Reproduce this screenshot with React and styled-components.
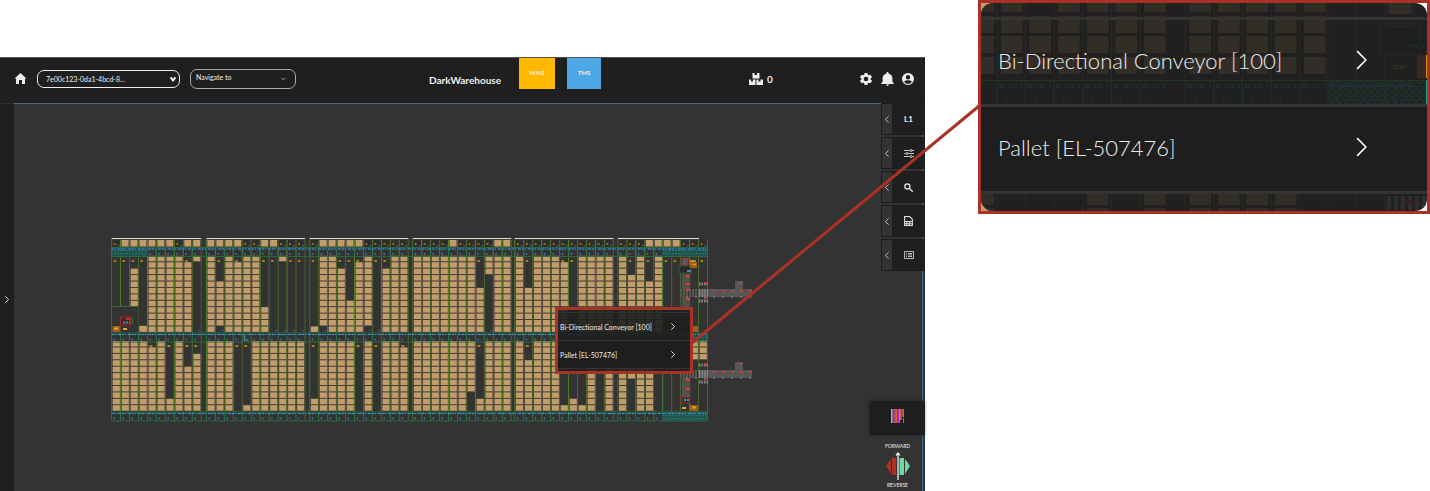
import React from "react";
import styled, { createGlobalStyle } from "styled-components";

const GlobalStyle = createGlobalStyle`
  * { box-sizing: border-box; }
  body { margin: 0; background: #fff; }
  button, select { font: inherit; color: inherit; }
  svg { display: block; }
`;

const Page = styled.div`
  position: relative;
  display: grid;
  grid-template-columns: minmax(0, 1fr) 452px;
  column-gap: 53px;
  align-items: start;
  min-height: 100vh;
  font-family: Lato, "Liberation Sans", sans-serif;
  color: #eee;
`;

const Frame = styled.main`
  margin-top: 57px;
  min-height: calc(100vh - 57px);
  display: flex;
  flex-direction: column;
  background: #333;
`;

const Header = styled.header`
  display: grid;
  grid-template-columns: minmax(0, 429fr) minmax(0, 320fr) minmax(0, 176fr);
  height: 46px;
  background: #1f1f1f;
  border-top: 1px solid #555;
`;

const HeaderLeft = styled.div`
  display: flex;
  align-items: center;
  gap: 10px;
  padding: 0 0 4px 14px;
`;

const HeaderCenter = styled.div`
  display: flex;
  align-items: flex-start;
`;

const HeaderRight = styled.div`
  display: flex;
  align-items: center;
  justify-content: space-between;
  padding: 0 11px 4px 0;
`;

const IconButton = styled.button`
  display: grid;
  place-items: center;
  padding: 0;
  border: 0;
  background: none;
  color: #eee;
`;

const IconGroup = styled.div`
  display: flex;
  align-items: center;
  gap: 8px;
`;

const Counter = styled.div`
  display: flex;
  align-items: center;
  gap: 4px;
  font-size: 10px;
  font-weight: 700;
`;

const SelectBox = styled.div`
  display: grid;
  align-items: center;
  width: ${(p) => p.$width}px;
  > * { grid-area: 1 / 1; }
  > svg { justify-self: end; margin-right: ${(p) => p.$inset}px; pointer-events: none; }
`;

const Select = styled.select`
  appearance: none;
  width: 100%;
  height: ${(p) => p.$height}px;
  padding: 0 16px ${(p) => p.$lift}px ${(p) => p.$indent}px;
  border: 1px solid ${(p) => p.$line};
  border-radius: 7px;
  background: transparent;
  font-size: 7px;
  line-height: 12px;
`;

const Title = styled.h1`
  flex: 0 0 90px;
  margin: 15px 0 0;
  font-size: 10px;
  line-height: 14px;
  font-weight: 700;
`;

const SystemLink = styled.a`
  width: ${(p) => p.$width}px;
  height: 31px;
  margin-right: 12px;
  background: ${(p) => p.$color};
  color: #f6ecd8;
  font-size: 6px;
  font-weight: 700;
  line-height: 30px;
  text-align: center;
  text-decoration: none;
`;

const Body = styled.div`
  flex: 1;
  display: flex;
`;

const SideRail = styled.aside`
  width: 14px;
  display: grid;
  place-items: center;
  padding-top: 3px;
  background: #1f1f1f;
  border-top: 1px solid #2c2c2c;
`;

const Canvas = styled.section`
  flex: 1;
  min-width: 0;
  padding: 134px 0 0 97px;
  border-top: 1px solid #4a6b83;
`;

const MapArea = styled.div`
  position: relative;
  width: 642px;
`;

const Dock = styled.aside`
  width: 44px;
  display: flex;
  flex-direction: column;
  align-items: flex-end;
  background: linear-gradient(to left, #333 2px, #3c6a8c 2px, #3c6a8c 3px, #333 3px);
`;

const DockTabs = styled.div`
  align-self: stretch;
  display: flex;
  flex-direction: column;
  gap: 2px;
`;

const DockTab = styled.button`
  display: grid;
  grid-template-columns: 10px 1fr;
  height: 32px;
  padding: 0;
  border: 1px solid #1c1c1c;
  border-right: 0;
  background: #1f1f1f;
  > span { display: grid; place-items: center; font-size: 8px; font-weight: 700; }
  > span:first-child { background: #333; }
`;

const LegendButton = styled.button`
  flex: none;
  display: grid;
  place-items: center;
  width: 55px;
  height: 34px;
  margin-top: auto;
  padding: 0 0 4px;
  border: 0;
  background: #1e1e1e;
  box-shadow: -1px 0 3px #222;
`;

const Direction = styled.div`
  width: 55px;
  height: 56px;
  display: flex;
  flex-direction: column;
  align-items: center;
  justify-content: space-between;
  padding: 7px 0 2px;
  font-size: 5px;
  line-height: 8px;
`;

const Popup = styled.div`
  position: absolute;
  left: 444px;
  top: 69px;
  width: 138px;
  padding: 2px 0;
  border: 3px solid #a93226;
  background: rgba(30, 30, 30, 0.9);
`;

const Callout = styled.aside`
  position: relative;
  height: 214px;
  border: 3px solid #a93226;
  background: linear-gradient(to right, #c39c6c 50%, #fff 50%);
  overflow: hidden;
`;

const CalloutPanel = styled.div`
  display: grid;
  height: 100%;
  border-radius: 12px;
  overflow: hidden;
  background: #202020;
  > * { grid-area: 1 / 1; }
`;

const CalloutMenu = styled.div`
  position: relative;
  padding: 14px 0 0;
`;

const MenuItem = styled.button`
  display: flex;
  align-items: center;
  justify-content: space-between;
  width: 100%;
  border: 0 solid #333;
  text-align: left;
  white-space: nowrap;
  ${(p) =>
    p.$large
      ? `height: 87px; padding: 0 60px 4px 17px; font-size: 22px; font-weight: 300; border-top-width: 3px;`
      : `height: 28px; padding: 0 15px 0 2px; font-size: 7px; border-top-width: 1px;`}
  background: ${(p) => (p.$solid ? "#1e1e1e" : "transparent")};
`;

const MenuEnd = styled.div`
  height: ${(p) => p.$size}px;
  background: #333;
`;

const Connector = styled.svg`
  position: absolute;
  left: 692px;
  right: 451px;
  top: 106px;
  width: calc(100% - 1143px);
  height: 237px;
  overflow: visible;
  pointer-events: none;
`;

function Chevron({ dir = "right", width = 5, height = 8, stroke = 1, color = "#ddd" }) {
  const paths = { right: "M1 1 L9 9 L1 17", left: "M9 1 L1 9 L9 17", down: "M1 4 L5 13 L9 4" };
  return (
    <svg width={width} height={height} viewBox="0 0 10 18" preserveAspectRatio="none" aria-hidden="true" overflow="visible">
      <path d={paths[dir]} fill="none" stroke={color} strokeWidth={stroke} vectorEffect="non-scaling-stroke" />
    </svg>
  );
}

/* Each storage lane: [pallet at the head, upper rows from-to, lower rows from-to] */
const F = [0, 11];
const L = [0, 10];
const lanes = [
  { x: 111.6, list: [[0, 0, L], [1, 0, L], [1, [2, 7], L], [1, [11, 11], L], [1, F, [1, 10]], [1, F, L], [1, F, [9, 10]], [0, F, L], [1, [1, 11], [4, 10]], [1, [0, 0], [2, 10]]] },
  { x: 206.4, list: [[1, F, L], [1, [4, 10], L], [1, F, L], [1, [1, 11], 0], [0, F, [10, 10]], [0, F, L], [1, [8, 11], L], [1, 0, L], [0, [0, 0], L], [0, 0, L], [0, 0, L]] },
  { x: 309.7, list: [[0, [11, 11], [9, 10]], [1, [0, 10], L], [1, F, L], [1, [2, 11], L], [1, [7, 11], L], [1, [1, 11], 0], [0, [0, 10], L], [0, 0, 0], [0, [2, 11], L], [0, F, L], [0, F, [1, 10]]] },
  { x: 412.7, list: [[0, F, L], [0, F, L], [0, F, L], [0, F, L], [1, F, L], [0, F, L], [0, F, [0, 7]], [0, [5, 11], [9, 10]], [0, [0, 2], L], [1, F, L], [1, F, L]] },
  { x: 514.8, list: [[0, F, L], [0, [5, 11], [3, 10]], [0, F, L], [0, F, L], [0, F, L], [0, [1, 11], [10, 10]], [0, 0, [9, 10]], [0, F, [10, 10]], [0, F, L], [0, F, 0], [0, F, L]] },
  { x: 617.9, list: [[0, F, L], [0, [3, 11], [0, 5]], [0, F, L], [1, [4, 11], L], [1, F, 0], [1, 0, 0], [1, 0, 0], [0, 0, 0], [0, 0, [0, 2]], [0, 0, [0, 2]]] },
];
const PITCH = 8.96;

function Stack({ x, range, top }) {
  if (!range) return null;
  const out = [];
  for (let r = range[0]; r <= range[1]; r++) {
    out.push(<rect key={r} x={x + 1.1} y={top + r * 6.42} width="7.2" height="5.5" fill="#c39c6c" />);
  }
  return <g>{out}</g>;
}

function Lane({ x, lane, seed }) {
  const [head, upper, lower] = lane;
  const line = seed % 3 === 1 ? "#4f8025" : "#4c682d";
  return (
    <g>
      <path d={`M${x} 239.500V332M${x} 341V411`} stroke={line} strokeWidth="1" />
      <path d={`M${x} 248V257M${x} 332V342M${x} 411V421`} stroke="#2a7740" strokeWidth="1" />
      <rect x={x + 1} y="240" width="7" height="6.500" fill={head ? "#c39c6c" : "#2d2d2d"} />
      {!head && <path d={`M${x + 2} 244h2`} stroke="#b8860b" strokeWidth="1.5" />}
      {!head && <path d={`M${x + 6} 245.500h2`} stroke="#34699a" />}
      <Stack x={x} range={upper} top={255.8} />
      {(!upper || upper[0] > 0) && <path d={`M${x + 2} 261h2.500`} stroke="#c8920c" strokeWidth="1.600" />}
      {(!upper || upper[1] < 11) && <path d={`M${x + 6} 330.500h2`} stroke="#2f668c" />}
      <Stack x={x} range={lower} top={341} />
      {(!lower || (lower[0] > 0 && lower[0] < 11)) && <path d={`M${x + 2} 346h3`} stroke="#c8920c" strokeWidth="1.600" />}
      {[254, 339.5, 418.5].map((y) => (
        <path key={y} d={`M${x + 2} ${y}h1.500`} stroke="#3b83b6" strokeWidth="1.600" />
      ))}
    </g>
  );
}

function Conveyor({ y }) {
  return (
    <g>
      <rect x="681" y={y} width="71" height="8" fill="#575757" />
      <rect x="735" y={y - 8} width="8" height="8" fill="#575757" />
      <path d={`M682 ${y + 4}H700`} stroke="#333" strokeWidth="7" strokeDasharray="1 2" />
      <path d={`M699 ${y + 4}H708`} stroke="#a5a5a5" strokeWidth="8" strokeDasharray="0.8 2" />
      <path d={`M699 ${y - 5}h9M699 ${y + 12}h9`} stroke="#888" strokeWidth="3" strokeDasharray="1.500 1" />
      <path d={`M704 ${y - 6}h3M704 ${y + 9}h3`} stroke="#e33a36" strokeWidth="1.500" />
      <path d={`M713 ${y + 2}H752`} stroke="#e33a36" strokeWidth="1.500" strokeDasharray="3 6" />
      <path d={`M739 ${y - 6}h3`} stroke="#e33a36" strokeWidth="1.500" />
      <path d={`M686 ${y + 8}H752`} stroke="#777" strokeWidth="1.500" strokeDasharray="2 7" />
    </g>
  );
}

function WarehouseMap() {
  return (
    <svg width="642" height="184" viewBox="111 238 642 184" role="img" aria-label="Warehouse map">
      <defs>
        <pattern id="mesh" width="3" height="3" patternUnits="userSpaceOnUse">
          <rect width="3" height="3" fill="#20524e" />
          <path d="M0 1.500h2" stroke="#21776e" />
        </pattern>
      </defs>
      {lanes.map((g, i) => {
        const end = g.x + g.list.length * PITCH;
        const whiteEnd = i === 5 ? 699 : end;
        return (
          <g key={g.x}>
            <path d={`M${g.x} 238.500H${whiteEnd}`} stroke="#ddd" strokeWidth="1" />
            <path d={`M${g.x} 240H${whiteEnd}M${g.x} 247.500H${end}`} stroke="#45562f" strokeWidth="0.800" />
            {g.list.map((lane, n) => (
              <Lane key={n} x={g.x + n * PITCH} lane={lane} seed={n + i} />
            ))}
            <path d={`M${end} 239.500V421`} stroke="#49602f" />
          </g>
        );
      })}
      <rect x="112" y="248" width="36" height="9" fill="url(#mesh)" />
      <rect x="662" y="248" width="45" height="9" fill="url(#mesh)" />
      <rect x="662" y="412" width="45" height="9" fill="url(#mesh)" />
      <rect x="680" y="333" width="27" height="8" fill="url(#mesh)" />
      {[249, 334.5, 413.5].map((y) => (
        <g key={y}>
          <path d={`M112 ${y}H707`} stroke="#22506a" strokeWidth="1.600" />
          <path d={`M112 ${y}H707`} stroke="#4592bd" strokeWidth="1" strokeDasharray="2 1 1 2 3 1" />
          <path d={`M112 ${y - 1.5}H707M112 ${y + 7.5}H707`} stroke="#2c6a3b" strokeWidth="0.900" />
        </g>
      ))}
      <rect x="112.500" y="306" width="26" height="26" fill="#333" />
      <path d="M112 306.500H139" stroke="#49602f" />
      <rect x="139.500" y="325.800" width="7" height="5.500" fill="#c39c6c" />
      <rect x="120.500" y="317" width="10" height="8" fill="#3b2727" stroke="#a22b24" />
      <path d="M123 322.500h7" stroke="#5490b0" strokeWidth="2" strokeDasharray="2 1" />
      <path d="M126 319h4" stroke="#e33a36" strokeWidth="1.500" />
      <path d="M132.500 317v7" stroke="#2a7740" />
      <rect x="112.500" y="326" width="8" height="6" fill="#a35d17" />
      <path d="M114 328.500h4M123 329h4" stroke="#e2ab22" strokeWidth="2" />
      <path d="M244.500 335v5h4" fill="none" stroke="#477fa6" strokeWidth="1.500" />
      <rect x="682" y="274" width="8" height="36" fill="#515151" />
      <rect x="682" y="376" width="8" height="26" fill="#515151" />
      <Conveyor y={289} />
      <Conveyor y={370} />
      <path d="M686 276h4M686 284h4M686 290h4M686 299h4M686 371h4M686 380h4M686 389h4" stroke="#e33a36" strokeWidth="1.800" />
      <rect x="679" y="266" width="12" height="7" fill="#292929" stroke="#285c32" />
      <rect x="682" y="258.500" width="6" height="6" fill="#51596a" stroke="#b52c28" />
      <rect x="690" y="262" width="7" height="6" fill="#9e5e17" />
      <path d="M690 261h6M692 264.500h4" stroke="#d79a20" strokeWidth="1.500" />
      <path d="M687 271h4" stroke="#4b8bb0" strokeWidth="2" />
      <rect x="681" y="397" width="9" height="6" fill="#333" stroke="#a22b24" />
      <path d="M684 400h5" stroke="#5490b0" strokeWidth="2" strokeDasharray="2 1" />
      <rect x="690" y="405" width="8" height="6" fill="#9e5e17" />
      <rect x="692" y="326" width="6" height="6" fill="#9e5e17" />
      <path d="M682 408h4M692 407.500h4" stroke="#e0aa20" strokeWidth="2" />
    </svg>
  );
}

function CalloutBackdrop() {
  const xs = [972.5, 1001, 1029.5, 1058, 1087, 1115.5, 1144, 1189.5, 1218, 1246.5, 1275, 1304];
  const bands = [1001, 1029.5, 1058, 1087, 1115.5, 1144, 1189.5, 1218, 1246.5, 1275, 1304, 1332, 1360, 1389];
  return (
    <svg width="446" height="208" viewBox="981 3 446 208" aria-hidden="true">
      <defs>
        <pattern id="rings" x="1329" y="81" width="7" height="7" patternUnits="userSpaceOnUse">
          <circle cx="3.500" cy="3.500" r="2.500" fill="none" stroke="#1c302e" strokeWidth="1.500" />
        </pattern>
      </defs>
      {xs.map((x, i) => (
        <g key={x} fill="#332d27">
          {i !== 2 && <rect x={x} y="0" width="21.500" height="12" />}
          <rect x={x} y="16" width="21.500" height="17" />
          <rect x={x} y="36" width="21.500" height="17" />
          <rect x={x} y="57" width="21.500" height="17" />
          {[0, 4, 6, 7, 8, 9, 10].includes(i) && <path d={`M${x} 194h21.500v11h-21.500zM${x} 208h21.500v3h-21.500z`} />}
        </g>
      ))}
      <rect x="1329" y="81" width="98" height="23" fill="url(#rings)" />
      {bands.map((x, i) => (
        <g key={x}>
          <path d={`M${x - 4} 3V80M${x - 4} 193V211`} stroke="#252c21" />
          <path d={`M${x - 4} 80V104`} stroke="#1c3624" />
          <text x={x - 2} y="88" fontFamily="Liberation Mono, monospace" fontSize="5" fill="#20394a">{`RF.${113 + i} A`}</text>
          <text x={x + 4} y="102" fontFamily="Liberation Mono, monospace" fontSize="5" fill="#20394a">2</text>
        </g>
      ))}
      <path d="M981 80.500H1427" stroke="#233523" />
      <rect x="1389" y="0" width="22" height="14" fill="#332d27" />
      <path d="M1388 3V26M1413 3V26M1389 19H1412M1389 23H1412" stroke="#2b2b2b" />
      <rect x="1379.500" y="27" width="41" height="27" fill="#1f1f1f" stroke="#202c20" />
      <text x="1408" y="48" fontFamily="Liberation Mono, monospace" fontSize="6" fill="#20394a">VTU.L</text>
      <text x="1393" y="69" fontFamily="Liberation Mono, monospace" fontSize="5" fill="#4c3f12">1124</text>
      <rect x="1417" y="55" width="10" height="23" fill="#36281f" />
      <path d="M1426.500 55V78" stroke="#e08a20" />
      <path d="M1426.500 80V110" stroke="#1fa29a" />
      <path d="M1426.500 119V122" stroke="#e0b020" />
      <path d="M1426.500 128V145M1426.500 149V166" stroke="#c39c6c" />
      <path d="M1387 203H1427" stroke="#2e2e2e" strokeWidth="14" strokeDasharray="4 3" />
      <rect x="1404" y="199" width="10" height="4" fill="#381f1e" />
    </svg>
  );
}

function AppHeader() {
  return (
    <Header>
      <HeaderLeft>
        <IconButton aria-label="Home">
          <svg width="13" height="11" viewBox="0 0 24 22" fill="currentColor"><path d="M12 0 24 11h-3v11h-6v-8H9v8H3V11H0z" /></svg>
        </IconButton>
        <SelectBox $width={143} $inset={4}>
          <Select aria-label="Site" $height={18} $line="#eee" $indent={8} $lift={0}>
            <option>7e00c123-0da1-4bcd-8...</option>
          </Select>
          <Chevron dir="down" width={6} height={6} stroke={2} color="#fff" />
        </SelectBox>
        <SelectBox $width={106} $inset={10}>
          <Select aria-label="Navigate to" $height={20} $line="#aaa" $indent={5} $lift={4}>
            <option>Navigate to</option>
          </Select>
          <Chevron dir="down" width={5} height={4} color="#999" />
        </SelectBox>
      </HeaderLeft>
      <HeaderCenter>
        <Title>DarkWarehouse</Title>
        <SystemLink href="#wms" $width={36} $color="#ffb800">WMS</SystemLink>
        <SystemLink href="#tms" $width={34} $color="#4fa8e6">TMS</SystemLink>
      </HeaderCenter>
      <HeaderRight>
        <Counter>
          <svg width="14" height="12" viewBox="0 0 28 24" fill="#eee">
            <path d="M7 0h4v4h5V0h5v11H7zM0 13h4v4h4v-4h5v11H0zM15 13h4v4h4v-4h5v11H15z" />
          </svg>
          0
        </Counter>
        <IconGroup>
          <IconButton aria-label="Settings">
            <svg width="14" height="14" viewBox="1 1 22 22" fill="currentColor">
              <path fillRule="evenodd" d="M19.140 12.940a7 7 0 0 0 0-1.880l2.030-1.580a.5.5 0 0 0 .12-.61l-1.920-3.320a.5.5 0 0 0-.59-.22l-2.390.96a7 7 0 0 0-1.620-.94l-.36-2.540a.5.5 0 0 0-.48-.41h-3.840a.5.5 0 0 0-.47.41l-.36 2.540a7 7 0 0 0-1.620.94l-2.390-.96a.5.5 0 0 0-.59.22L2.740 8.870a.5.5 0 0 0 .12.610l2.030 1.580a7 7 0 0 0 0 1.880l-2.030 1.580a.5.5 0 0 0-.12.610l1.920 3.320c.12.220.37.290.59.220l2.390-.96c.5.380 1.030.7 1.620.94l.36 2.540c.05.240.24.410.48.410h3.840c.24 0 .44-.17.47-.41l.36-2.540a7 7 0 0 0 1.620-.94l2.390.96c.22.080.47 0 .59-.22l1.920-3.320a.5.5 0 0 0-.12-.61zM12 15.600A3.600 3.600 0 1 1 12 8.400a3.600 3.600 0 0 1 0 7.200z" />
            </svg>
          </IconButton>
          <IconButton aria-label="Notifications">
            <svg width="13" height="14" viewBox="3 2 18 20" fill="currentColor">
              <path d="M12 22a2 2 0 0 0 2-2h-4a2 2 0 0 0 2 2zm7-6v-5c0-3.500-2-6-5.500-7V3.500a1.500 1.500 0 0 0-3 0V4C7 5 5 7.500 5 11v5l-2 2v1h18v-1z" />
            </svg>
          </IconButton>
          <IconButton aria-label="Account">
            <svg width="12" height="12" viewBox="2 2 20 20" fill="currentColor">
              <path fillRule="evenodd" d="M12 2a10 10 0 1 0 0 20 10 10 0 0 0 0-20zm0 3.500a3.700 3.700 0 1 1 0 7.400 3.700 3.700 0 0 1 0-7.400zM12 20c-3 0-5-1.500-6.500-3.500C7 14.800 10 14 12 14s5 .8 6.500 2.500C17 18.500 15 20 12 20z" />
            </svg>
          </IconButton>
        </IconGroup>
      </HeaderRight>
    </Header>
  );
}

const dockIcons = [
  ["Level", "L1"],
  ["Filters", <svg key="f" width="10" height="9" viewBox="0 0 20 18" fill="none" stroke="#ddd" strokeWidth="1.800"><path d="M0 3h12M16 3h4M0 9h3M8 9h12M0 15h11M16 15h4" /><circle cx="14" cy="3" r="2" /><circle cx="6" cy="9" r="2" /><circle cx="14" cy="15" r="2" /></svg>],
  ["Search", <svg key="s" width="9" height="9" viewBox="0 0 16 16" fill="none" stroke="#eee" strokeWidth="2.200"><circle cx="6" cy="6" r="4.500" /><path d="m9.500 9.500 6 6" /></svg>],
  ["Report", <svg key="r" width="9" height="10" viewBox="0 0 16 18" fill="none" stroke="#ddd" strokeWidth="2"><path d="M1 17V1h9l5 5v11zM1 10h14M1 14h14M5 11v6M10 11v6" /></svg>],
  ["List", <svg key="l" width="10" height="8" viewBox="0 0 20 16" fill="none" stroke="#ccc" strokeWidth="1.800"><path d="M1 1h18v14H1zM4 5h2M8 5h8M4 8h2M8 8h8M4 11h2M8 11h8" /></svg>],
];

const legendColors = ["#8fc9ae", "#7a3fae", "#e0457d", "#d95a2e", "#b32ac2", "#e08a4c", "#f01c4c", "#9c7a55"];

export default function App() {
  return (
    <Page>
      <GlobalStyle />
      <Frame>
        <AppHeader />
        <Body>
          <SideRail><IconButton aria-label="Open side panel"><Chevron width={4} height={7} /></IconButton></SideRail>
          <Canvas>
            <MapArea>
              <WarehouseMap />
              <Popup>
                <MenuItem>Bi-Directional Conveyor [100]<Chevron width={4} height={7} /></MenuItem>
                <MenuItem $solid>Pallet [EL-507476]<Chevron width={4} height={7} /></MenuItem>
                <MenuEnd $size={1} />
              </Popup>
            </MapArea>
          </Canvas>
          <Dock>
            <DockTabs>
              {dockIcons.map(([name, icon]) => (
                <DockTab key={name} aria-label={name}>
                  <span><Chevron dir="left" width={4} height={7} color="#bbb" /></span>
                  <span>{icon}</span>
                </DockTab>
              ))}
            </DockTabs>
            <LegendButton aria-label="Legend">
              <svg width="13" height="14" viewBox="0 0 13 14">
                {legendColors.map((c, i) => <rect key={c} x={i * 1.625} width="1.700" height="14" fill={c} />)}
                <path d="M9 14V11h2V8h2v1h-1v5z" fill="#222" />
              </svg>
            </LegendButton>
            <Direction>
              FORWARD
              <svg width="24" height="28" viewBox="0 0 24 28">
                <path d="M0 14 5 7v15zM6 6h4v17H6z" fill="#a93226" />
                <path d="M24 14 19 7v15zM13.500 6H18v17h-4.500z" fill="#6fd8a0" />
                <path d="M12 28V2M10 3.500 12 1l2 2.500" fill="none" stroke="#fff" strokeWidth="1.200" />
              </svg>
              REVERSE
            </Direction>
          </Dock>
        </Body>
      </Frame>
      <Callout>
        <CalloutPanel>
          <CalloutBackdrop />
          <CalloutMenu>
            <MenuItem $large>Bi-Directional Conveyor [100]<Chevron width={11} height={20} stroke={1.5} color="#fff" /></MenuItem>
            <MenuItem $large $solid>Pallet [EL-507476]<Chevron width={11} height={20} stroke={1.5} color="#fff" /></MenuItem>
            <MenuEnd $size={3} />
          </CalloutMenu>
        </CalloutPanel>
      </Callout>
      <Connector viewBox="0 0 287 237" preserveAspectRatio="none" aria-hidden="true">
        <path d="M0 237 287 0" stroke="#a93226" strokeWidth="3" vectorEffect="non-scaling-stroke" />
      </Connector>
    </Page>
  );
}
